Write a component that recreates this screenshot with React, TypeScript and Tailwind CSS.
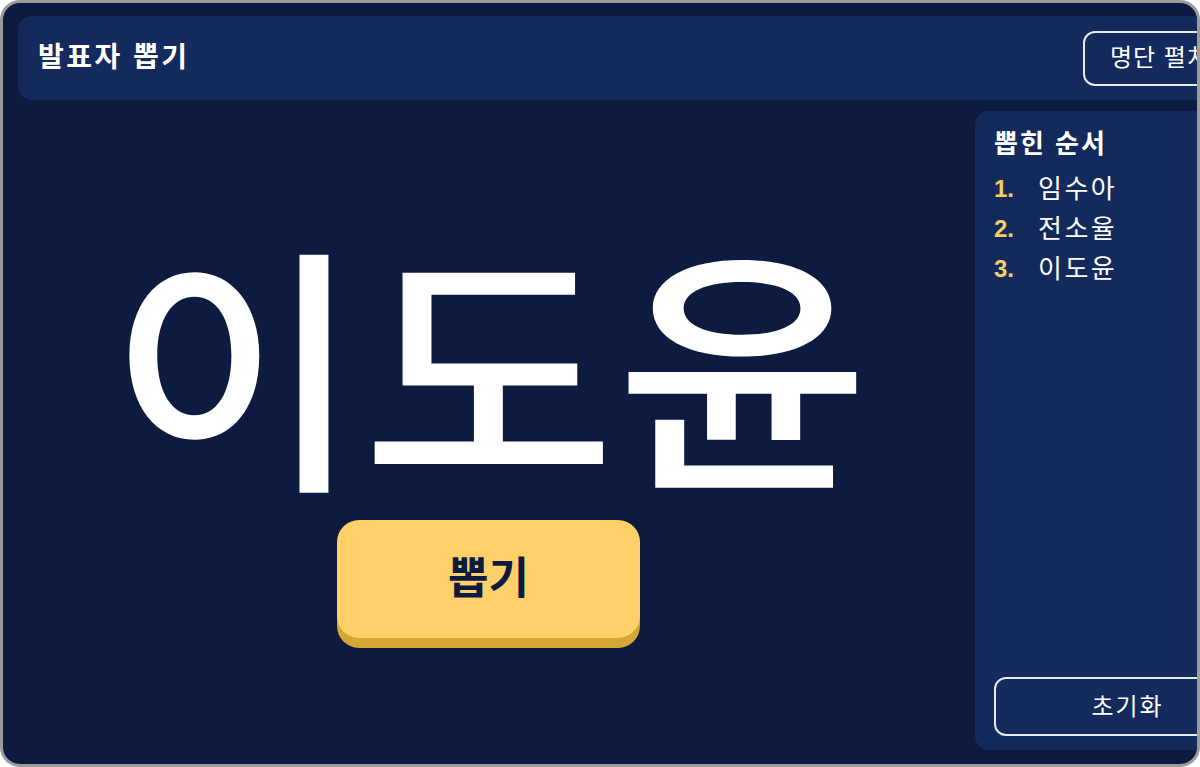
import React from "react";

const FONT = { fontFamily: '"Liberation Sans", "Noto Sans CJK KR", sans-serif' };

export default function App() {
  const picked = ["임수아", "전소율", "이도윤"];
  return (
    <div className="w-[1200px] h-[767px] bg-white" style={FONT}>
      <div className="w-[1200px] h-[767px] border-[3px] border-[#9c9c9c] rounded-[20px] bg-[#0e1b41] overflow-hidden flex flex-col pt-[13px] pl-[15px]">
        <header className="w-[1262px] shrink-0 h-[84px] rounded-[14px] bg-[#142a5c] flex items-center justify-between pl-[20px] pr-[20px]">
          <h1 className="text-[28px] font-bold text-white leading-none tracking-[2.5px]">발표자 뽑기</h1>
          <button className="h-[55px] w-[177px] rounded-[12px] border-2 border-[#e6eaf3] text-[24px] text-white leading-none whitespace-nowrap tracking-[1px]">
            명단 펼치기
          </button>
        </header>
        <div className="flex flex-1 min-h-0 mt-[11px] mb-[14px] gap-[12px]">
          <main className="w-[941px] shrink-0 mr-[4px] flex flex-col items-center pt-[140px]">
            <div className="text-[260px] leading-none font-medium text-white whitespace-nowrap scale-x-[1.06]">이도윤</div>
            <button className="mt-[9px] w-[303px] h-[118px] rounded-[22px] bg-[#fdd06a] shadow-[0_10px_0_#d6a736] text-[44px] font-bold text-[#0e1b41] leading-none">
              뽑기
            </button>
          </main>
          <aside className="w-[304px] shrink-0 rounded-[14px] bg-[#142a5c] flex flex-col pt-[16px] pl-[19px] pr-[18px] pb-[14px]">
            <h2 className="text-[26px] font-bold text-white leading-[34px] tracking-[2px]">뽑힌 순서</h2>
            <ol className="mt-[8px] flex flex-col">
              {picked.map((n, i) => (
                <li key={n} className="flex items-center h-[40px]">
                  <span className="w-[44px] text-[24px] font-bold text-[#f5cf63]">{i + 1}.</span>
                  <span className="text-[26px] text-white tracking-[2.5px]">{n}</span>
                </li>
              ))}
            </ol>
            <div className="flex-1" />
            <button className="h-[59px] w-full rounded-[12px] border-2 border-[#e6eaf3] text-[24px] text-white leading-none tracking-[2px]">
              초기화
            </button>
          </aside>
        </div>
      </div>
    </div>
  );
}
